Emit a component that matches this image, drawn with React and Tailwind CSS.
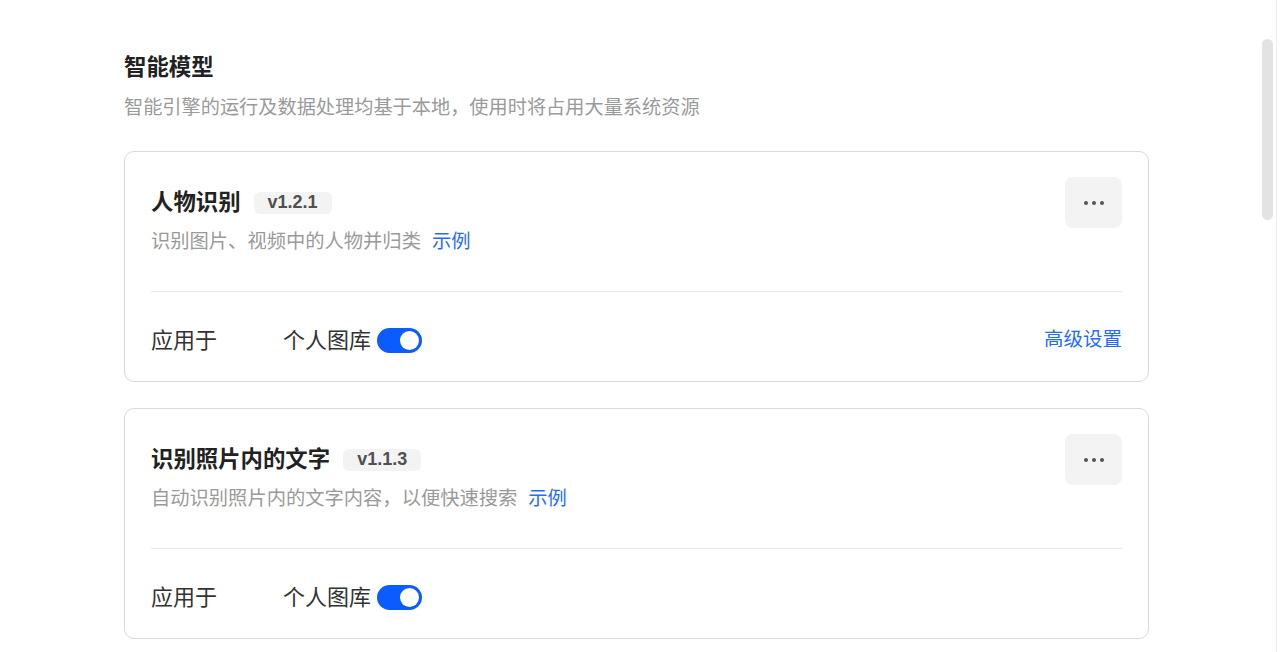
import React from 'react'

const FONT = { fontFamily: '"Liberation Sans", "Noto Sans CJK SC", "Noto Sans", sans-serif' }

const models = [
  {
    name: '人物识别',
    version: 'v1.2.1',
    desc: '识别图片、视频中的人物并归类',
    advanced: true,
  },
  {
    name: '识别照片内的文字',
    version: 'v1.1.3',
    desc: '自动识别照片内的文字内容，以便快速搜索',
    advanced: false,
  },
]

function Toggle() {
  return (
    <div className="flex h-[25px] w-[45px] items-center justify-end rounded-full bg-[#0a5cff] px-[3px]">
      <div className="h-[19px] w-[19px] rounded-full bg-white" />
    </div>
  )
}

function ModelCard({ model }) {
  return (
    <div className="w-[1025px] rounded-[10px] border border-[#d9d9d9] bg-white px-[26px] pt-[25px] pb-[21px]">
      {/* header */}
      <div className="flex items-start justify-between">
        <div>
          <div className="flex h-[51px] items-center gap-[13px]">
            <span className="text-[22.4px] font-bold text-[#222]">{model.name}</span>
            <span className="flex h-[22px] items-center rounded-[6px] bg-[#f3f3f3] px-[14px] text-[18px] font-bold text-[#505050]">
              {model.version}
            </span>
          </div>
          <div className="flex h-[29px] items-center text-[19.3px] text-[#9a9a9a]">
            <span>{model.desc}</span>
            <span className="ml-[11px] text-[#1f6bff]">示例</span>
          </div>
        </div>
        <button className="flex h-[51px] w-[57px] items-center justify-center gap-[4px] rounded-[8px] bg-[#f3f3f3]">
          <span className="h-[4px] w-[4px] rounded-full bg-[#555]" />
          <span className="h-[4px] w-[4px] rounded-full bg-[#555]" />
          <span className="h-[4px] w-[4px] rounded-full bg-[#555]" />
        </button>
      </div>

      <div className="mt-[34px] h-px bg-[#e8e8e8]" />

      {/* apply row */}
      <div className="mt-[28px] flex h-[40px] items-center justify-between">
        <div className="flex items-center">
          <span className="w-[132px] text-[22px] text-[#333]">应用于</span>
          <span className="text-[22px] text-[#333]">个人图库</span>
          <div className="ml-[6px]">
            <Toggle />
          </div>
        </div>
        {model.advanced && <span className="text-[19.5px] text-[#1f6bff]">高级设置</span>}
      </div>
    </div>
  )
}

export default function App() {
  return (
    <div className="relative flex h-screen w-full overflow-hidden bg-white" style={FONT}>
      <div className="flex-1 pl-[124px] pt-[52px]">
        <h1 className="text-[22.4px] font-bold leading-[32px] text-[#222]">智能模型</h1>
        <p className="mt-[9px] text-[19.2px] leading-[30px] text-[#9a9a9a]">
          智能引擎的运行及数据处理均基于本地，使用时将占用大量系统资源
        </p>
        <div className="mt-[28px] flex flex-col gap-[26px]">
          {models.map((m) => (
            <ModelCard key={m.name} model={m} />
          ))}
        </div>
      </div>

      {/* scrollbar */}
      <div className="flex w-[18px] justify-start pl-[4px] pt-[39px]">
        <div className="h-[181px] w-[11px] rounded-full bg-[#e3e3e3]" />
      </div>
      <div className="w-px bg-[#ececec]" />
      <div className="w-[3px]" />
    </div>
  )
}
